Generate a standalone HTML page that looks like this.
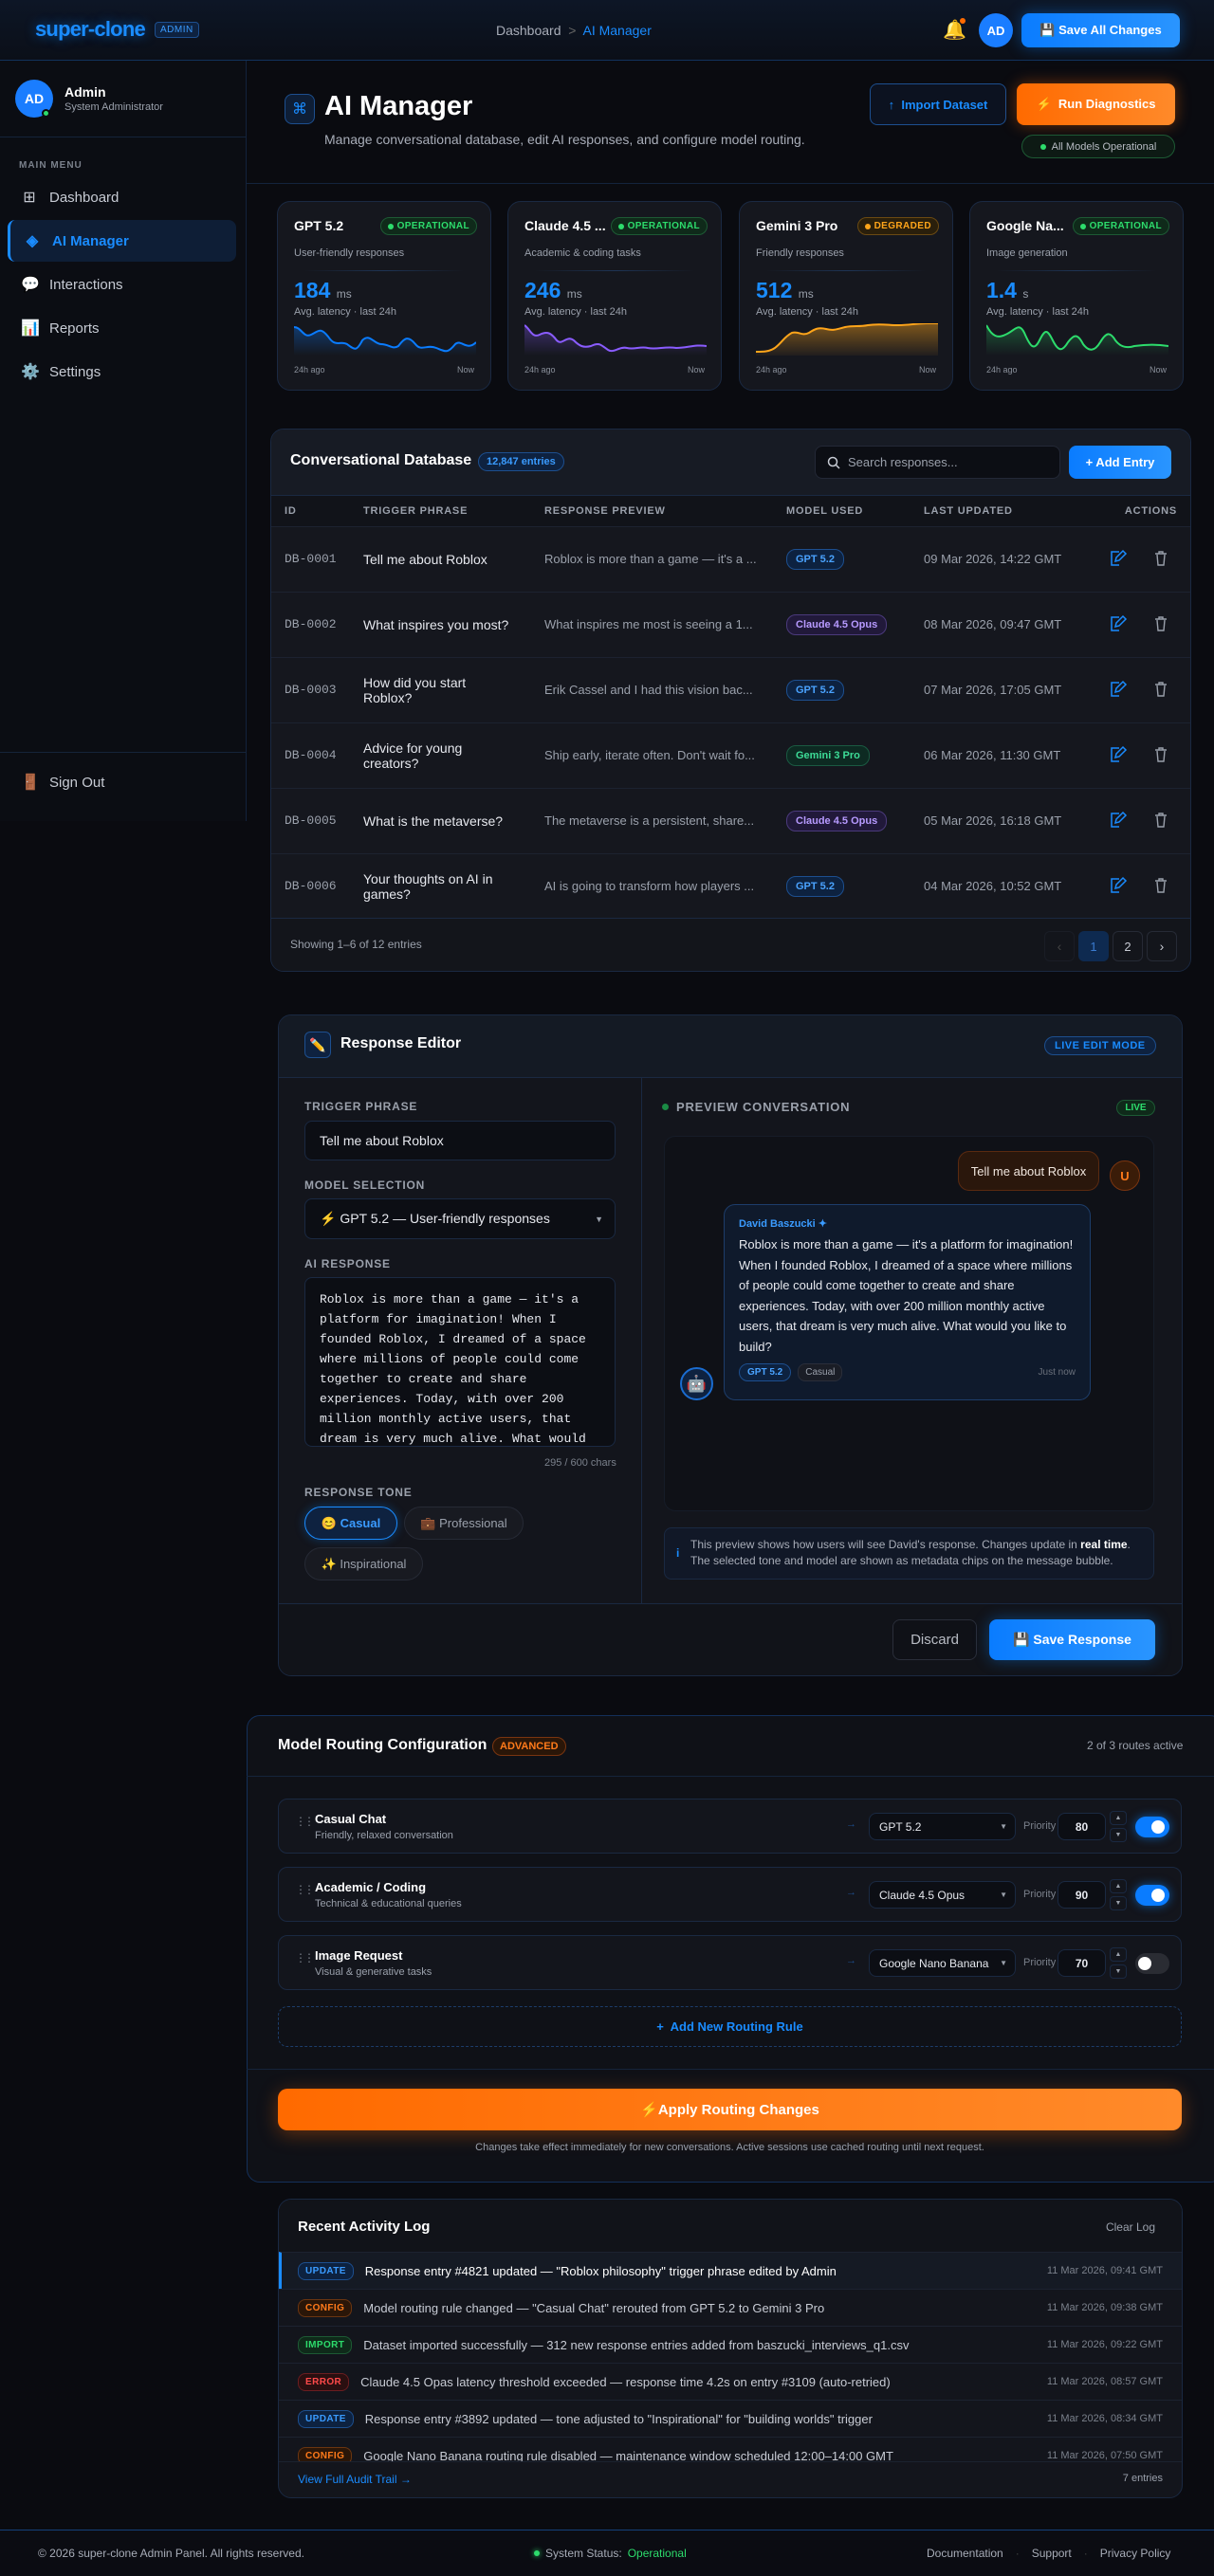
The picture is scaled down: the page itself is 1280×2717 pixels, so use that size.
<!DOCTYPE html>
<html><head><meta charset="utf-8">
<style>
*{box-sizing:border-box;margin:0;padding:0}
body{width:1280px;height:2717px;background:#0a0b10;font-family:"Liberation Sans",sans-serif;color:#e6e8ee;position:relative;overflow:hidden;font-size:14px}
.abs{position:absolute}
.hdr{left:0;top:0;width:1280px;height:64px;background:linear-gradient(180deg,#0d1626,#0b0f18);border-bottom:1px solid #12325c}
.logo{left:37px;top:18px;font-size:22px;font-weight:bold;color:#1a8cff;letter-spacing:-0.8px;text-shadow:0 0 12px rgba(10,132,255,.6)}
.badge-admin{left:163px;top:23px;font-size:10px;color:#3a9bff;border:1px solid #1d4f8f;background:#0e2240;border-radius:4px;padding:2px 5px;letter-spacing:.5px}
.crumb{left:523px;top:24px;font-size:14px;color:#a8adb8}
.crumb b{color:#1a8cff;font-weight:normal}
.btn-blue{background:linear-gradient(90deg,#0a7cff,#2a95ff);color:#fff;font-weight:bold;border-radius:8px;display:flex;align-items:center;justify-content:center;gap:6px;box-shadow:0 0 16px rgba(10,132,255,.4)}
.side{left:0;top:64px;width:260px;height:802px;border-right:1px solid #13233c;background:#0b0d13}
.av{border-radius:50%;background:#1a7dff;color:#fff;font-weight:bold;display:flex;align-items:center;justify-content:center}
.nav{left:8px;width:241px;height:44px;display:flex;align-items:center;padding-left:14px;font-size:15px;color:#c7cbd4;gap:12px;border-radius:8px}
.nav .ic{width:18px;text-align:center;font-size:16px}
.nav.act{background:#0e1e36;color:#1a8cff;border-left:3px solid #1a8cff;font-weight:bold}
.card{background:#15171e;border:1px solid #1a2942;border-radius:14px}
.stat{top:212px;width:226px;height:200px;padding:0 16px}
.stat .t{position:absolute;left:17px;top:17px;font-size:14px;font-weight:bold;color:#fff}
.pill{display:inline-flex;align-items:center;gap:4px;border-radius:10px;font-size:10px;font-weight:bold;padding:3px 7px;letter-spacing:.4px}
.op{background:#0f2a1a;border:1px solid #1d5a34;color:#2ddc6c}
.dg{background:#2a1f0b;border:1px solid #6b4a12;color:#ffa51a}
.dot{width:6px;height:6px;border-radius:50%;display:inline-block}
.stat .st{position:absolute;right:14px;top:16px}
.stat .sub{position:absolute;left:17px;top:48px;font-size:11px;color:#9aa0ab}
.stat .hr{position:absolute;left:28px;right:28px;top:72px;height:1px;background:linear-gradient(90deg,transparent,#1e3455,transparent)}
.stat .v{position:absolute;left:17px;top:80px;font-size:23px;font-weight:bold}
.stat .v small{font-size:12px;color:#9aa0ab;font-weight:normal}
.stat .l{position:absolute;left:17px;top:110px;font-size:11px;color:#9aa0ab}
.stat svg{position:absolute;left:17px;top:128px}
.stat .ax{position:absolute;left:17px;right:17px;top:172px;font-size:9px;color:#8a909b;display:flex;justify-content:space-between}
th{font-size:11px;color:#9aa0ab;letter-spacing:.8px;text-align:left;font-weight:bold;height:32px;padding:0}
td{height:69px;border-top:1px solid #1c2230;font-size:14px;padding:0}
.mono{font-family:"Liberation Mono",monospace;color:#9aa0ab;font-size:13px}
.mchip{display:inline-block;font-size:11px;font-weight:bold;border-radius:10px;padding:4px 9px}
.cg{background:#0d2240;border:1px solid #1d4f8f;color:#4aa3ff}
.cc{background:#21193a;border:1px solid #4b3a7c;color:#b79aff}
.cm{background:#0d2a22;border:1px solid #1a5a42;color:#3ddc97}
.lbl{font-size:12px;font-weight:bold;color:#9aa0ab;letter-spacing:.8px}
.inp{background:#0c0e14;border:1px solid #1a2942;border-radius:8px;color:#e6e8ee;font-size:14px;display:flex;align-items:center;padding-left:15px}
.row{left:293px;width:953px;height:58px;background:#13151c;border:1px solid #1a2942;border-radius:10px}
.tg{position:absolute;width:36px;height:22px;border-radius:11px;top:18px;left:903px}
.tg::after{content:"";position:absolute;top:4px;width:14px;height:14px;border-radius:50%;background:#fff}
.on{background:#0a7cff;box-shadow:0 0 10px rgba(10,132,255,.6)}.on::after{right:5px}
.off{background:#2a2c33}.off::after{left:3px}
.lg{display:flex;align-items:center;height:39px;border-top:1px solid #1c2230;padding:0 20px;font-size:13px;color:#c7cbd4}
.tag{font-size:10px;font-weight:bold;border-radius:8px;padding:3px 7px;margin-right:12px;letter-spacing:.4px}
.tu{background:#0d2240;border:1px solid #1d4f8f;color:#3a9bff}
.tc{background:#2a1608;border:1px solid #6b3510;color:#ff7a1a}
.ti{background:#0f2a1a;border:1px solid #1d5a34;color:#2ddc6c}
.te{background:#2a0f10;border:1px solid #6b1d20;color:#ff4a4a}
.lg .d{margin-left:auto;font-size:11px;color:#7a808b}
</style></head><body>

<div class="abs hdr"></div>
<div class="abs logo">super-clone</div>
<div class="abs badge-admin">ADMIN</div>
<div class="abs crumb">Dashboard &nbsp;<span style="color:#666">&gt;</span>&nbsp; <b>AI Manager</b></div>
<div class="abs" style="left:994px;top:19px;font-size:20px">🔔</div>
<div class="abs" style="left:1012px;top:19px;width:6px;height:6px;border-radius:50%;background:#ff6a00"></div>
<div class="abs av" style="left:1032px;top:14px;width:36px;height:36px;font-size:13px">AD</div>
<div class="abs btn-blue" style="left:1077px;top:14px;width:167px;height:36px;font-size:13px">💾 Save All Changes</div>

<div class="abs side"></div>
<div class="abs av" style="left:16px;top:84px;width:40px;height:40px;font-size:14px">AD</div>
<div class="abs" style="left:44px;top:115px;width:9px;height:9px;border-radius:50%;background:#2ddc6c;border:2px solid #0b0d13"></div>
<div class="abs" style="left:68px;top:89px;font-size:14px;font-weight:bold;color:#fff">Admin</div>
<div class="abs" style="left:68px;top:107px;font-size:11px;color:#9aa0ab">System Administrator</div>
<div class="abs" style="left:0;top:144px;width:259px;height:1px;background:#15243a"></div>
<div class="abs" style="left:20px;top:169px;font-size:10px;font-weight:bold;color:#7a808b;letter-spacing:1px">MAIN MENU</div>
<div class="abs nav" style="top:186px"><span class="ic">⊞</span>Dashboard</div>
<div class="abs nav act" style="top:232px"><span class="ic">◈</span>AI Manager</div>
<div class="abs nav" style="top:278px"><span class="ic">💬</span>Interactions</div>
<div class="abs nav" style="top:324px"><span class="ic">📊</span>Reports</div>
<div class="abs nav" style="top:370px"><span class="ic">⚙️</span>Settings</div>
<div class="abs" style="left:0;top:793px;width:259px;height:1px;background:#15243a"></div>
<div class="abs nav" style="top:803px"><span class="ic">🚪</span>Sign Out</div>

<div class="abs" style="left:300px;top:99px;width:32px;height:32px;border-radius:8px;background:#0e1e36;border:1px solid #1d4f8f;color:#1a8cff;display:flex;align-items:center;justify-content:center;font-size:16px">⌘</div>
<div class="abs" style="left:342px;top:96px;font-size:29px;font-weight:bold;color:#fff">AI Manager</div>
<div class="abs" style="left:342px;top:139px;font-size:14px;color:#a8adb8">Manage conversational database, edit AI responses, and configure model routing.</div>
<div class="abs" style="left:917px;top:88px;width:144px;height:44px;border:1px solid #1d4f8f;border-radius:8px;background:#0c1220;color:#1a8cff;font-size:13px;font-weight:bold;display:flex;align-items:center;justify-content:center">↑&nbsp; Import Dataset</div>
<div class="abs" style="left:1072px;top:88px;width:167px;height:44px;border-radius:8px;background:linear-gradient(90deg,#ff6a00,#ff8a2a);color:#fff;font-size:13px;font-weight:bold;display:flex;align-items:center;justify-content:center;box-shadow:0 0 16px rgba(255,106,0,.4)">⚡&nbsp; Run Diagnostics</div>
<div class="abs" style="left:1077px;top:142px;width:162px;height:25px;border:1px solid #1d5a34;border-radius:13px;background:#0d1a14;color:#b8bcc4;font-size:11px;display:flex;align-items:center;justify-content:center;gap:6px"><span class="dot" style="background:#2ddc6c"></span>All Models Operational</div>
<div class="abs" style="left:260px;top:193px;width:1020px;height:1px;background:#13233c"></div>

<div class="abs card stat" style="left:292px">
<div class="t">GPT 5.2</div><div class="st pill op"><span class="dot" style="background:#2ddc6c"></span>OPERATIONAL</div>
<div class="sub">User-friendly responses</div><div class="hr"></div>
<div class="v" style="color:#1a8cff">184 <small>ms</small></div><div class="l">Avg. latency · last 24h</div>
<svg width="192" height="34" viewBox="0 0 192 34"><defs><linearGradient id="g1" x1="0" y1="0" x2="0" y2="1"><stop offset="0" stop-color="#0a7cff" stop-opacity=".35"/><stop offset="1" stop-color="#0a7cff" stop-opacity="0"/></linearGradient></defs><path d="M0 4 C8 4 10 16 18 12 C26 8 28 4 36 14 C44 26 48 18 56 22 C64 28 66 30 72 18 C80 10 84 22 92 22 C100 22 104 28 110 24 C116 16 120 12 128 22 C134 30 140 22 150 26 C160 30 162 32 170 22 C176 16 182 30 192 20 L192 34 L0 34Z" fill="url(#g1)"/><path d="M0 4 C8 4 10 16 18 12 C26 8 28 4 36 14 C44 26 48 18 56 22 C64 28 66 30 72 18 C80 10 84 22 92 22 C100 22 104 28 110 24 C116 16 120 12 128 22 C134 30 140 22 150 26 C160 30 162 32 170 22 C176 16 182 30 192 20" fill="none" stroke="#0a7cff" stroke-width="2"/></svg>
<div class="ax"><span>24h ago</span><span>Now</span></div></div>

<div class="abs card stat" style="left:535px">
<div class="t">Claude 4.5 ...</div><div class="st pill op"><span class="dot" style="background:#2ddc6c"></span>OPERATIONAL</div>
<div class="sub">Academic &amp; coding tasks</div><div class="hr"></div>
<div class="v" style="color:#1a8cff">246 <small>ms</small></div><div class="l">Avg. latency · last 24h</div>
<svg width="192" height="34" viewBox="0 0 192 34"><defs><linearGradient id="g2" x1="0" y1="0" x2="0" y2="1"><stop offset="0" stop-color="#8a5cff" stop-opacity=".35"/><stop offset="1" stop-color="#8a5cff" stop-opacity="0"/></linearGradient></defs><path d="M0 2 C6 6 8 16 16 12 C24 8 28 10 34 18 C40 24 44 12 52 18 C58 24 62 26 70 24 C78 20 80 22 88 28 C94 32 100 24 108 26 C116 28 122 24 130 26 C140 28 148 24 160 26 C172 26 180 22 192 24 L192 34 L0 34Z" fill="url(#g2)"/><path d="M0 2 C6 6 8 16 16 12 C24 8 28 10 34 18 C40 24 44 12 52 18 C58 24 62 26 70 24 C78 20 80 22 88 28 C94 32 100 24 108 26 C116 28 122 24 130 26 C140 28 148 24 160 26 C172 26 180 22 192 24" fill="none" stroke="#8a5cff" stroke-width="2"/></svg>
<div class="ax"><span>24h ago</span><span>Now</span></div></div>

<div class="abs card stat" style="left:779px">
<div class="t">Gemini 3 Pro</div><div class="st pill dg"><span class="dot" style="background:#ffa51a"></span>DEGRADED</div>
<div class="sub">Friendly responses</div><div class="hr"></div>
<div class="v" style="color:#1a8cff">512 <small>ms</small></div><div class="l">Avg. latency · last 24h</div>
<svg width="192" height="34" viewBox="0 0 192 34"><defs><linearGradient id="g3" x1="0" y1="0" x2="0" y2="1"><stop offset="0" stop-color="#ffa51a" stop-opacity=".45"/><stop offset="1" stop-color="#ffa51a" stop-opacity=".05"/></linearGradient></defs><path d="M0 30 C8 30 14 30 20 26 C28 20 30 14 38 10 C46 8 48 14 56 10 C62 6 66 4 74 6 C82 8 86 6 94 4 C104 2 108 4 118 2 C130 0 140 2 150 2 C162 2 170 0 180 0 C186 0 190 0 192 0 L192 34 L0 34Z" fill="url(#g3)"/><path d="M0 30 C8 30 14 30 20 26 C28 20 30 14 38 10 C46 8 48 14 56 10 C62 6 66 4 74 6 C82 8 86 6 94 4 C104 2 108 4 118 2 C130 0 140 2 150 2 C162 2 170 0 180 0 C186 0 190 0 192 0" fill="none" stroke="#ffa51a" stroke-width="2"/></svg>
<div class="ax"><span>24h ago</span><span>Now</span></div></div>

<div class="abs card stat" style="left:1022px">
<div class="t">Google Na...</div><div class="st pill op"><span class="dot" style="background:#2ddc6c"></span>OPERATIONAL</div>
<div class="sub">Image generation</div><div class="hr"></div>
<div class="v" style="color:#1a8cff">1.4 <small>s</small></div><div class="l">Avg. latency · last 24h</div>
<svg width="192" height="34" viewBox="0 0 192 34"><defs><linearGradient id="g4" x1="0" y1="0" x2="0" y2="1"><stop offset="0" stop-color="#2ddc6c" stop-opacity=".3"/><stop offset="1" stop-color="#2ddc6c" stop-opacity="0"/></linearGradient></defs><path d="M0 2 C6 14 12 16 20 12 C30 8 34 -2 40 10 C46 24 50 30 56 18 C62 6 64 6 70 18 C76 30 80 30 86 20 C92 12 96 10 102 22 C108 30 114 30 120 20 C126 10 130 8 136 18 C142 26 150 26 156 24 C170 22 180 22 192 24 L192 34 L0 34Z" fill="url(#g4)"/><path d="M0 2 C6 14 12 16 20 12 C30 8 34 -2 40 10 C46 24 50 30 56 18 C62 6 64 6 70 18 C76 30 80 30 86 20 C92 12 96 10 102 22 C108 30 114 30 120 20 C126 10 130 8 136 18 C142 26 150 26 156 24 C170 22 180 22 192 24" fill="none" stroke="#2ddc6c" stroke-width="2"/></svg>
<div class="ax"><span>24h ago</span><span>Now</span></div></div>

<div class="abs card" style="left:285px;top:452px;width:971px;height:573px;overflow:hidden;background:#15171e">
 <div style="height:70px;background:#171b24;border-bottom:1px solid #1a2942;position:relative">
  <div class="abs" style="left:20px;top:24px;font-size:16px;font-weight:bold;color:#fff">Conversational Database</div>
  <div class="abs" style="left:218px;top:24px;font-size:11px;font-weight:bold;color:#3a9bff;background:#0e2240;border:1px solid #1d4f8f;border-radius:10px;padding:3px 8px">12,847 entries</div>
  <div class="abs" style="left:573px;top:17px;width:259px;height:35px;border:1px solid #232836;border-radius:8px;background:#0c0e14;color:#9aa0ab;font-size:13px;display:flex;align-items:center;padding-left:12px;gap:8px"><svg width="14" height="14" viewBox="0 0 14 14"><circle cx="6" cy="6" r="4.5" stroke="#c7cbd4" stroke-width="1.5" fill="none"/><path d="M9.5 9.5 L13 13" stroke="#c7cbd4" stroke-width="1.5"/></svg>Search responses...</div>
  <div class="abs btn-blue" style="left:841px;top:17px;width:108px;height:35px;font-size:13px;box-shadow:none">+ Add Entry</div>
 </div>
 <table style="width:100%;border-collapse:collapse;table-layout:fixed">
  <tr style="background:#111319"><th style="width:97px;padding-left:14px">ID</th><th style="width:191px">TRIGGER PHRASE</th><th style="width:255px">RESPONSE PREVIEW</th><th style="width:145px">MODEL USED</th><th style="width:190px">LAST UPDATED</th><th style="text-align:right;padding-right:14px">ACTIONS</th></tr>
  <tr><td class="mono" style="padding-left:14px">DB-0001</td><td>Tell me about Roblox</td><td style="color:#9aa0ab;font-size:13px">Roblox is more than a game — it's a ...</td><td><span class="mchip cg">GPT 5.2</span></td><td style="color:#9aa0ab;font-size:13px">09 Mar 2026, 14:22 GMT</td><td></td></tr>
  <tr><td class="mono" style="padding-left:14px">DB-0002</td><td>What inspires you most?</td><td style="color:#9aa0ab;font-size:13px">What inspires me most is seeing a 1...</td><td><span class="mchip cc">Claude 4.5 Opus</span></td><td style="color:#9aa0ab;font-size:13px">08 Mar 2026, 09:47 GMT</td><td></td></tr>
  <tr><td class="mono" style="padding-left:14px">DB-0003</td><td>How did you start<br>Roblox?</td><td style="color:#9aa0ab;font-size:13px">Erik Cassel and I had this vision bac...</td><td><span class="mchip cg">GPT 5.2</span></td><td style="color:#9aa0ab;font-size:13px">07 Mar 2026, 17:05 GMT</td><td></td></tr>
  <tr><td class="mono" style="padding-left:14px">DB-0004</td><td>Advice for young<br>creators?</td><td style="color:#9aa0ab;font-size:13px">Ship early, iterate often. Don't wait fo...</td><td><span class="mchip cm">Gemini 3 Pro</span></td><td style="color:#9aa0ab;font-size:13px">06 Mar 2026, 11:30 GMT</td><td></td></tr>
  <tr><td class="mono" style="padding-left:14px">DB-0005</td><td>What is the metaverse?</td><td style="color:#9aa0ab;font-size:13px">The metaverse is a persistent, share...</td><td><span class="mchip cc">Claude 4.5 Opus</span></td><td style="color:#9aa0ab;font-size:13px">05 Mar 2026, 16:18 GMT</td><td></td></tr>
  <tr><td class="mono" style="padding-left:14px">DB-0006</td><td>Your thoughts on AI in<br>games?</td><td style="color:#9aa0ab;font-size:13px">AI is going to transform how players ...</td><td><span class="mchip cg">GPT 5.2</span></td><td style="color:#9aa0ab;font-size:13px">04 Mar 2026, 10:52 GMT</td><td></td></tr>
 </table>
 <div style="position:absolute;left:0;right:0;top:515px;height:58px;border-top:1px solid #1a2942;background:#13151b">
  <div class="abs" style="left:20px;top:20px;font-size:12px;color:#9aa0ab">Showing 1–6 of 12 entries</div>
  <div class="abs" style="left:815px;top:13px;width:32px;height:32px;border:1px solid #1a1d26;border-radius:6px;color:#444;display:flex;align-items:center;justify-content:center">‹</div>
  <div class="abs" style="left:851px;top:13px;width:32px;height:32px;border-radius:6px;background:#0e2a50;color:#3a7bd0;display:flex;align-items:center;justify-content:center;font-size:13px">1</div>
  <div class="abs" style="left:887px;top:13px;width:32px;height:32px;border:1px solid #262a35;border-radius:6px;color:#c7cbd4;display:flex;align-items:center;justify-content:center;font-size:13px">2</div>
  <div class="abs" style="left:923px;top:13px;width:32px;height:32px;border:1px solid #262a35;border-radius:6px;color:#c7cbd4;display:flex;align-items:center;justify-content:center">›</div>
 </div>
</div>
<svg class="abs" style="left:1168px;top:574px" width="80" height="420">
 <g id="ai"><path d="M12 22 h-8 v-14 h8" fill="none" stroke="#1a8cff" stroke-width="1.5"/><path d="M8 18 l1-4 7-7 3 3-7 7z" fill="none" stroke="#1a8cff" stroke-width="1.5"/><path d="M50 10 h12 M54 10 v-2 h4 v2 M52 11 l1 11 h6 l1-11" fill="none" stroke="#9aa0ab" stroke-width="1.4"/></g>
 <use href="#ai" y="69"/><use href="#ai" y="138"/><use href="#ai" y="207"/><use href="#ai" y="276"/><use href="#ai" y="345"/>
</svg>

<div class="abs card" style="left:293px;top:1070px;width:954px;height:698px;background:#13151c;overflow:hidden">
 <div style="height:66px;border-bottom:1px solid #1a2942;background:#141a24;position:relative">
  <div class="abs" style="left:27px;top:17px;width:28px;height:28px;border-radius:6px;background:#0e2240;border:1px solid #1d4f8f;display:flex;align-items:center;justify-content:center;font-size:14px">✏️</div>
  <div class="abs" style="left:65px;top:21px;font-size:16px;font-weight:bold;color:#fff">Response Editor</div>
  <div class="abs" style="left:807px;top:22px;font-size:11px;font-weight:bold;color:#1a8cff;border:1px solid #1d4f8f;background:#0e2240;border-radius:10px;padding:3px 10px;letter-spacing:.5px">LIVE EDIT MODE</div>
 </div>
 <div class="abs" style="left:382px;top:66px;width:1px;height:555px;background:#1a2942"></div>
 <div class="abs" style="left:0;top:620px;width:954px;height:78px;border-top:1px solid #1a2942;background:#111319"></div>
</div>
<div class="abs lbl" style="left:321px;top:1160px">TRIGGER PHRASE</div>
<div class="abs inp" style="left:321px;top:1182px;width:328px;height:42px">Tell me about Roblox</div>
<div class="abs lbl" style="left:321px;top:1243px">MODEL SELECTION</div>
<div class="abs inp" style="left:321px;top:1264px;width:328px;height:43px">⚡ GPT 5.2 — User-friendly responses<span style="margin-left:auto;margin-right:12px;font-size:9px;color:#9aa0ab">▼</span></div>
<div class="abs lbl" style="left:321px;top:1326px">AI RESPONSE</div>
<div class="abs inp" style="left:321px;top:1347px;width:328px;height:179px;align-items:flex-start;padding:12px 15px 0;font-family:'Liberation Mono',monospace;font-size:13px;line-height:21px;overflow:hidden;white-space:pre">Roblox is more than a game — it's a
platform for imagination! When I
founded Roblox, I dreamed of a space
where millions of people could come
together to create and share
experiences. Today, with over 200
million monthly active users, that
dream is very much alive. What would</div>
<div class="abs" style="left:574px;top:1537px;font-size:11px;color:#7a808b">295 / 600 chars</div>
<div class="abs lbl" style="left:321px;top:1567px">RESPONSE TONE</div>
<div class="abs" style="left:321px;top:1589px;width:98px;height:35px;border-radius:18px;border:1px solid #1a8cff;background:#0e2240;color:#3a9bff;font-weight:bold;font-size:13px;display:flex;align-items:center;justify-content:center;gap:6px;box-shadow:0 0 10px rgba(10,132,255,.35)">😊 Casual</div>
<div class="abs" style="left:426px;top:1589px;width:126px;height:35px;border-radius:18px;border:1px solid #262a35;background:#181a21;color:#9aa0ab;font-size:13px;display:flex;align-items:center;justify-content:center;gap:6px">💼 Professional</div>
<div class="abs" style="left:321px;top:1632px;width:125px;height:35px;border-radius:18px;border:1px solid #262a35;background:#181a21;color:#9aa0ab;font-size:13px;display:flex;align-items:center;justify-content:center;gap:6px">✨ Inspirational</div>

<div class="abs" style="left:698px;top:1164px;width:7px;height:7px;border-radius:50%;background:#1a8a44"></div>
<div class="abs lbl" style="left:713px;top:1160px;font-size:13px">PREVIEW CONVERSATION</div>
<div class="abs" style="left:1177px;top:1160px;width:41px;height:17px;border-radius:9px;border:1px solid #1d5a34;background:#0f2a1a;color:#2ddc6c;font-size:10px;font-weight:bold;display:flex;align-items:center;justify-content:center">LIVE</div>
<div class="abs" style="left:700px;top:1198px;width:517px;height:396px;border:1px solid #161c28;border-radius:12px;background:#0f1117"></div>
<div class="abs" style="left:1010px;top:1214px;width:149px;height:42px;border-radius:12px;background:#2a170c;border:1px solid #5a2a10;color:#f0e6de;font-size:13px;display:flex;align-items:center;justify-content:center">Tell me about Roblox</div>
<div class="abs" style="left:1170px;top:1224px;width:32px;height:32px;border-radius:50%;background:#3a1c08;border:1px solid #7a3510;color:#ff7a1a;font-size:13px;font-weight:bold;display:flex;align-items:center;justify-content:center">U</div>
<div class="abs" style="left:763px;top:1270px;width:387px;height:207px;border-radius:12px;border:1px solid #1d3d6a;background:#0f1a2c;padding:13px 15px">
 <div style="font-size:11px;font-weight:bold;color:#3a9bff">David Baszucki ✦</div>
 <div style="font-size:13px;line-height:21.5px;color:#e6e8ee;margin-top:5px">Roblox is more than a game — it's a platform for imagination! When I founded Roblox, I dreamed of a space where millions of people could come together to create and share experiences. Today, with over 200 million monthly active users, that dream is very much alive. What would you like to build?</div>
 <div style="display:flex;gap:7px;align-items:center;margin-top:7px"><span class="mchip cg" style="font-size:10px;padding:3px 8px">GPT 5.2</span><span style="font-size:10px;color:#9aa0ab;border:1px solid #2a2e3a;background:#1a1d26;border-radius:8px;padding:3px 7px">Casual</span><span style="margin-left:auto;font-size:10px;color:#6a707b">Just now</span></div>
</div>
<div class="abs" style="left:717px;top:1442px;width:35px;height:35px;border-radius:50%;border:2px solid #1a6cd0;background:#0e2240;display:flex;align-items:center;justify-content:center;font-size:17px">🤖</div>
<div class="abs" style="left:700px;top:1611px;width:517px;height:55px;border:1px solid #1a2942;border-radius:8px;background:#111827;padding:9px 14px 0 27px;font-size:12px;line-height:17px;color:#a8adb8">This preview shows how users will see David's response. Changes update in <b style="color:#fff">real time</b>. The selected tone and model are shown as metadata chips on the message bubble.</div>
<div class="abs" style="left:713px;top:1631px;color:#1a8cff;font-size:12px;font-weight:bold">i</div>
<div class="abs" style="left:941px;top:1708px;width:89px;height:43px;border:1px solid #2a2e3a;border-radius:8px;background:#0f1117;color:#b8bcc4;font-size:15px;display:flex;align-items:center;justify-content:center">Discard</div>
<div class="abs btn-blue" style="left:1043px;top:1708px;width:175px;height:43px;font-size:14px">💾 Save Response</div>

<div class="abs card" style="left:260px;top:1809px;width:1030px;height:493px;background:#0f1117;border-color:#14305a"></div>
<div class="abs" style="left:260px;top:1873px;width:1020px;height:1px;background:#15243a"></div>
<div class="abs" style="left:293px;top:1832px;font-size:16px;font-weight:bold;color:#fff">Model Routing Configuration</div>
<div class="abs" style="left:519px;top:1832px;font-size:11px;font-weight:bold;color:#ff7a1a;border:1px solid #7a3510;background:#2a1608;border-radius:10px;padding:3px 7px">ADVANCED</div>
<div class="abs" style="left:1146px;top:1834px;font-size:12px;color:#9aa0ab">2 of 3 routes active</div>

<div class="abs row" style="top:1897px"><div class="abs" style="left:17px;top:20px;color:#7a808b;font-size:12px;line-height:6px;letter-spacing:-3px">⋮⋮</div><div class="abs" style="left:38px;top:13px;font-size:13px;font-weight:bold;color:#fff">Casual Chat</div><div class="abs" style="left:38px;top:32px;font-size:11px;color:#9aa0ab">Friendly, relaxed conversation</div><div class="abs" style="left:598px;top:20px;color:#1d4f8f;font-size:11px">→</div><div class="abs inp" style="left:622px;top:14px;width:155px;height:29px;font-size:12px;padding-left:10px">GPT 5.2<span style="margin-left:auto;margin-right:8px;font-size:8px;color:#9aa0ab">▼</span></div><div class="abs" style="left:785px;top:22px;font-size:11px;color:#7a808b">Priority</div><div class="abs inp" style="left:821px;top:14px;width:51px;height:29px;font-size:12px;font-weight:bold;justify-content:center;padding:0">80</div><div class="abs" style="left:876px;top:12px;width:18px;height:15px;border:1px solid #1a2942;border-radius:4px;font-size:7px;color:#9aa0ab;text-align:center;line-height:13px">▲</div><div class="abs" style="left:876px;top:30px;width:18px;height:15px;border:1px solid #1a2942;border-radius:4px;font-size:7px;color:#9aa0ab;text-align:center;line-height:13px">▼</div><div class="tg on"></div></div>
<div class="abs row" style="top:1969px"><div class="abs" style="left:17px;top:20px;color:#7a808b;font-size:12px;line-height:6px;letter-spacing:-3px">⋮⋮</div><div class="abs" style="left:38px;top:13px;font-size:13px;font-weight:bold;color:#fff">Academic / Coding</div><div class="abs" style="left:38px;top:32px;font-size:11px;color:#9aa0ab">Technical &amp; educational queries</div><div class="abs" style="left:598px;top:20px;color:#1d4f8f;font-size:11px">→</div><div class="abs inp" style="left:622px;top:14px;width:155px;height:29px;font-size:12px;padding-left:10px">Claude 4.5 Opus<span style="margin-left:auto;margin-right:8px;font-size:8px;color:#9aa0ab">▼</span></div><div class="abs" style="left:785px;top:22px;font-size:11px;color:#7a808b">Priority</div><div class="abs inp" style="left:821px;top:14px;width:51px;height:29px;font-size:12px;font-weight:bold;justify-content:center;padding:0">90</div><div class="abs" style="left:876px;top:12px;width:18px;height:15px;border:1px solid #1a2942;border-radius:4px;font-size:7px;color:#9aa0ab;text-align:center;line-height:13px">▲</div><div class="abs" style="left:876px;top:30px;width:18px;height:15px;border:1px solid #1a2942;border-radius:4px;font-size:7px;color:#9aa0ab;text-align:center;line-height:13px">▼</div><div class="tg on"></div></div>
<div class="abs row" style="top:2041px"><div class="abs" style="left:17px;top:20px;color:#7a808b;font-size:12px;line-height:6px;letter-spacing:-3px">⋮⋮</div><div class="abs" style="left:38px;top:13px;font-size:13px;font-weight:bold;color:#fff">Image Request</div><div class="abs" style="left:38px;top:32px;font-size:11px;color:#9aa0ab">Visual &amp; generative tasks</div><div class="abs" style="left:598px;top:20px;color:#1d4f8f;font-size:11px">→</div><div class="abs inp" style="left:622px;top:14px;width:155px;height:29px;font-size:12px;padding-left:10px">Google Nano Banana<span style="margin-left:auto;margin-right:8px;font-size:8px;color:#9aa0ab">▼</span></div><div class="abs" style="left:785px;top:22px;font-size:11px;color:#7a808b">Priority</div><div class="abs inp" style="left:821px;top:14px;width:51px;height:29px;font-size:12px;font-weight:bold;justify-content:center;padding:0">70</div><div class="abs" style="left:876px;top:12px;width:18px;height:15px;border:1px solid #1a2942;border-radius:4px;font-size:7px;color:#9aa0ab;text-align:center;line-height:13px">▲</div><div class="abs" style="left:876px;top:30px;width:18px;height:15px;border:1px solid #1a2942;border-radius:4px;font-size:7px;color:#9aa0ab;text-align:center;line-height:13px">▼</div><div class="tg off"></div></div>
<div class="abs" style="left:293px;top:2116px;width:953px;height:43px;border:1px dashed #1d3d6a;border-radius:10px;color:#1a8cff;font-size:13px;font-weight:bold;display:flex;align-items:center;justify-content:center">+&nbsp; Add New Routing Rule</div>
<div class="abs" style="left:260px;top:2182px;width:1020px;height:1px;background:#15243a"></div>
<div class="abs" style="left:293px;top:2203px;width:953px;height:44px;border-radius:10px;background:linear-gradient(90deg,#ff6a00,#ff8a2a);color:#fff;font-size:15px;font-weight:bold;display:flex;align-items:center;justify-content:center;box-shadow:0 4px 20px rgba(255,106,0,.35)">⚡Apply Routing Changes</div>
<div class="abs" style="left:293px;top:2259px;width:953px;text-align:center;font-size:11px;color:#9aa0ab">Changes take effect immediately for new conversations. Active sessions use cached routing until next request.</div>

<div class="abs card" style="left:293px;top:2319px;width:954px;height:316px;background:#13151c;overflow:hidden">
 <div style="height:55px;position:relative;background:#111319"><div class="abs" style="left:20px;top:20px;font-size:15px;font-weight:bold;color:#fff">Recent Activity Log</div><div class="abs" style="right:28px;top:22px;font-size:12px;color:#9aa0ab">Clear Log</div></div>
 <div style="height:221px;overflow:hidden">
 <div class="lg" style="border-left:3px solid #1a8cff;background:#151a24;padding-left:17px"><span class="tag tu">UPDATE</span><span style="color:#fff">Response entry #4821 updated — "Roblox philosophy" trigger phrase edited by Admin</span><span class="d">11 Mar 2026, 09:41 GMT</span></div>
 <div class="lg"><span class="tag tc">CONFIG</span>Model routing rule changed — "Casual Chat" rerouted from GPT 5.2 to Gemini 3 Pro<span class="d">11 Mar 2026, 09:38 GMT</span></div>
 <div class="lg"><span class="tag ti">IMPORT</span>Dataset imported successfully — 312 new response entries added from baszucki_interviews_q1.csv<span class="d">11 Mar 2026, 09:22 GMT</span></div>
 <div class="lg"><span class="tag te">ERROR</span>Claude 4.5 Opas latency threshold exceeded — response time 4.2s on entry #3109 (auto-retried)<span class="d">11 Mar 2026, 08:57 GMT</span></div>
 <div class="lg"><span class="tag tu">UPDATE</span>Response entry #3892 updated — tone adjusted to "Inspirational" for "building worlds" trigger<span class="d">11 Mar 2026, 08:34 GMT</span></div>
 <div class="lg"><span class="tag tc">CONFIG</span>Google Nano Banana routing rule disabled — maintenance window scheduled 12:00–14:00 GMT<span class="d">11 Mar 2026, 07:50 GMT</span></div>
 </div>
 <div style="border-top:1px solid #1c2230;height:40px;position:relative"><div class="abs" style="left:20px;top:11px;font-size:12px;color:#1a8cff">View Full Audit Trail →</div><div class="abs" style="right:20px;top:11px;font-size:11px;color:#9aa0ab">7 entries</div></div>
</div>

<div class="abs" style="left:0;top:2668px;width:1280px;height:49px;border-top:1px solid #13407a;background:#0b0c12"></div>
<div class="abs" style="left:40px;top:2686px;font-size:12px;color:#a8adb8">© 2026 super-clone Admin Panel. All rights reserved.</div>
<div class="abs" style="left:563px;top:2686px;font-size:12px;color:#a8adb8;display:flex;align-items:center;gap:6px"><span class="dot" style="background:#2ddc6c;box-shadow:0 0 6px #2ddc6c"></span>System Status: <span style="color:#2ddc6c">Operational</span></div>
<div class="abs" style="left:977px;top:2686px;font-size:12px;color:#a8adb8;display:flex;gap:13px"><span>Documentation</span><span style="color:#444">·</span><span>Support</span><span style="color:#444">·</span><span>Privacy Policy</span></div>
</body></html>
